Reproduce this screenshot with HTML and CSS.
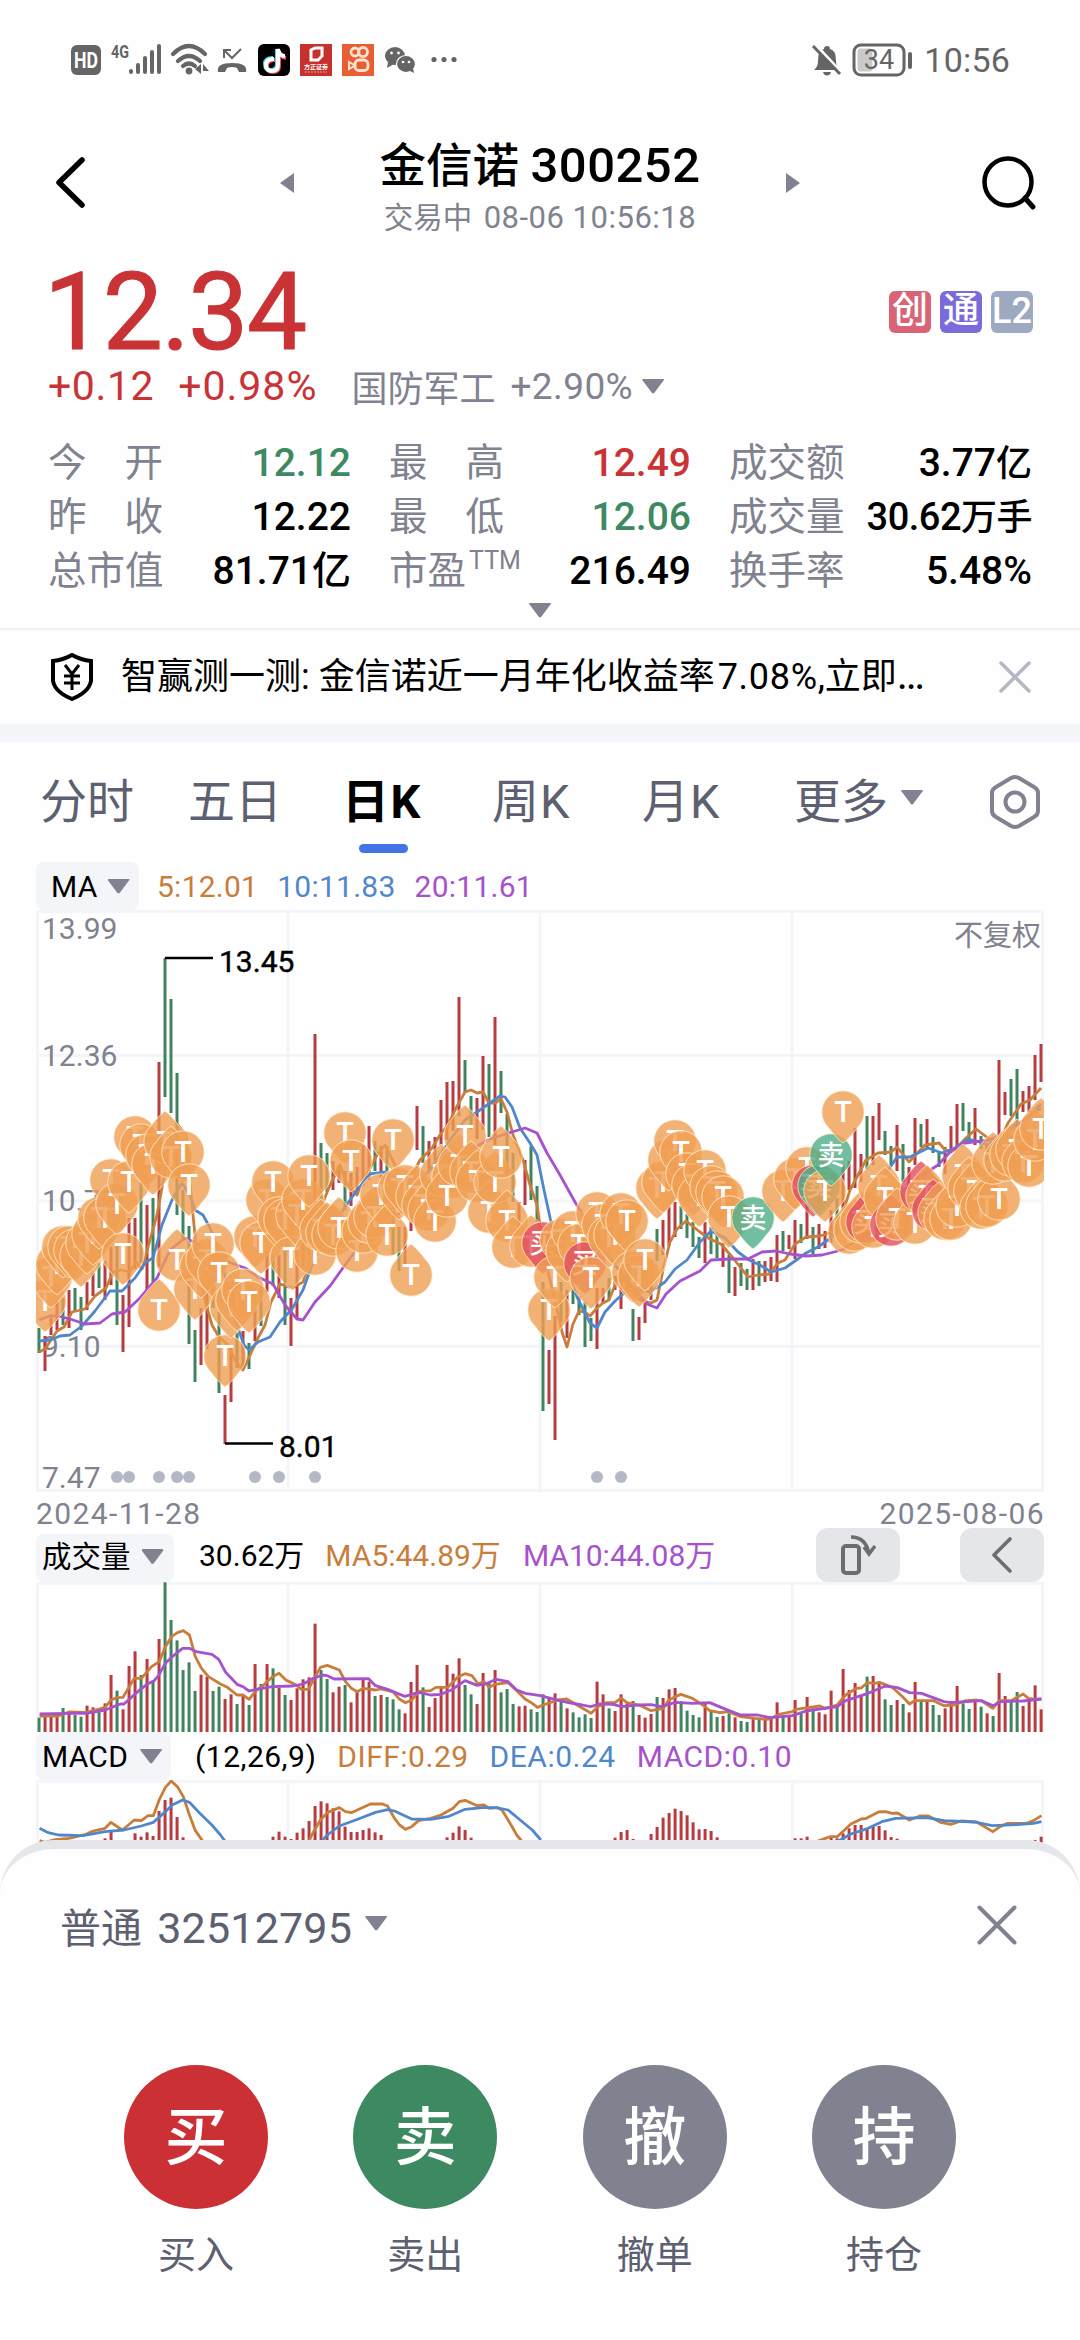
FILE: index.html
```html
<!DOCTYPE html>
<html lang="zh-CN">
<head>
<meta charset="utf-8">
<title>金信诺 300252</title>
<link rel="stylesheet" href="styles.css">
</head>
<body>
<div class="phone">
  <div class="status">
    <svg class="status-icons" width="410" height="60" viewBox="0 0 410 60">
      <rect x="11" y="15" width="30" height="30" rx="6" fill="#656565"/>
      <text x="26" y="38" class="hd" text-anchor="middle" textLength="24" lengthAdjust="spacingAndGlyphs">HD</text>
      <text x="51" y="28" class="g4" textLength="18" lengthAdjust="spacingAndGlyphs">4G</text>
      <g stroke="#656565" stroke-width="4" stroke-linecap="round"><path d="M71 41v1M78 35v7M85 28v14M92 22v20M99 16v26"/></g>
      <g fill="none" stroke="#656565" stroke-width="4.2" stroke-linecap="round"><path d="M113 24q16-16 32 0M118 31q11-10 22 0M123 36q6-5 12 0"/></g>
      <circle cx="129" cy="41" r="3.4" fill="#656565"/><path d="M141 34v10l-6-5zM143 34l6 7h-6z" fill="#656565"/>
      <path d="M158 42q-2-9 14-9t14 9h-7l-2-4q-5-2-10 0l-2 4z" fill="#656565"/>
      <path d="M164 28v-8h7M165 21l7 7 9-9" fill="none" stroke="#656565" stroke-width="2"/>
      <rect x="198" y="14" width="32" height="32" rx="6" fill="#000"/>
      <g fill="none" stroke-width="4"><path d="M213 28q-8 0-8 6t6 6 6-6V19q1 6 7 7" stroke="#45dbe0"/><path d="M215 30q-8 0-8 6t6 6 6-6V21q1 6 7 7" stroke="#ee4c63"/><path d="M214 29q-8 0-8 6t6 6 6-6V19q1 7 7 7" stroke="#fff"/></g>
      <rect x="240" y="14" width="32" height="32" fill="#c7312d"/>
      <path d="M251 20l4-2h7v8l-4 4h-7z" fill="none" stroke="#fff" stroke-width="3"/>
      <text x="256" y="39" class="fz" text-anchor="middle">方正证券</text>
      <path d="M245 42h22" stroke="#ee9b95" stroke-width="1" stroke-dasharray="2 1"/>
      <rect x="282" y="14" width="32" height="32" fill="#e85d31"/>
      <g fill="none" stroke="#ffe3d3" stroke-width="2.8"><circle cx="295" cy="22" r="4"/><circle cx="303" cy="22" r="4.5"/><rect x="295" y="30" width="13" height="10.500" rx="4"/><path d="M289 32v7l6-3.500z" stroke-width="2"/></g>
      <g fill="#656565"><ellipse cx="335" cy="26" rx="10" ry="9"/><path d="M328 32l-1 6 7-4z"/></g>
      <g fill="#656565" stroke="#fff" stroke-width="1.200"><ellipse cx="346" cy="34" rx="9.500" ry="8.500"/></g><path d="M348 40l6 3-1-5z" fill="#656565"/>
      <g fill="#fff"><circle cx="331.500" cy="23" r="1.400"/><circle cx="338.500" cy="23" r="1.400"/><circle cx="343" cy="32" r="1.300"/><circle cx="349" cy="32" r="1.300"/></g>
      <g fill="#656565"><circle cx="374" cy="29.500" r="2.600"/><circle cx="384" cy="29.500" r="2.600"/><circle cx="394" cy="29.500" r="2.600"/></g>
    </svg>
    <div class="status-right">
      <svg width="32" height="34" viewBox="0 0 32 34"><path d="M3 27q4-3 4-9 0-11 6-12 0-3 3-3t3 3q6 1 6 12 0 6 4 9zM12 29h8q-1 3.500-4 3.500t-4-3.500z" fill="#656565"/><path d="M4 1l26 28" stroke="#fff" stroke-width="3"/><path d="M2 3l27 28" stroke="#656565" stroke-width="3"/></svg>
      <svg width="62" height="34" viewBox="0 0 62 34"><rect x="2" y="2" width="50" height="30" rx="7" fill="none" stroke="#656565" stroke-width="3"/><rect x="5.500" y="5.500" width="15" height="23" rx="3" fill="#c9c9c9"/><text x="27" y="26" class="batt" text-anchor="middle">34</text><path d="M58 11v13" stroke="#656565" stroke-width="4" stroke-linecap="round"/></svg>
      <span class="clock">10:56</span>
    </div>
  </div>

  <header class="header">
    <svg class="back" width="32" height="56" viewBox="0 0 32 56"><path d="M27 5L4 27.500 27 50" fill="none" stroke="#000" stroke-width="5.500" stroke-linecap="round" stroke-linejoin="round"/></svg>
    <svg class="prev" width="14" height="22" viewBox="0 0 14 22"><path d="M14 1v20L0 11z" fill="#80828f"/></svg>
    <div class="title">
      <h1>金信诺 <span class="num">300252</span></h1>
      <p>交易中 <span class="num">08-06 10:56:18</span></p>
    </div>
    <svg class="next" width="14" height="22" viewBox="0 0 14 22"><path d="M0 1v20l14-10z" fill="#80828f"/></svg>
    <svg class="search" width="56" height="56" viewBox="0 0 56 56"><circle cx="27" cy="27" r="23.500" fill="none" stroke="#000" stroke-width="4.500"/><path d="M44 43l8 9" stroke="#000" stroke-width="5" stroke-linecap="round"/></svg>
  </header>

  <section class="quote">
    <div class="price-row"><span class="price">12.34</span><div class="tags"><i class="tag t1">创</i><i class="tag t2">通</i><i class="tag t3">L2</i></div></div>
    <div class="change-row"><span class="up">+0.12</span><span class="up pct">+0.98%</span><span class="sector">国防军工</span><span class="sector-pct">+2.90%</span><i class="caret"></i></div>
    <div class="stats">
      <div class="stat"><b>今<s></s>开</b><span class="down">12.12</span></div>
      <div class="stat"><b>最<s></s>高</b><span class="up">12.49</span></div>
      <div class="stat"><b>成交额</b><span>3.77<em>亿</em></span></div>
      <div class="stat"><b>昨<s></s>收</b><span>12.22</span></div>
      <div class="stat"><b>最<s></s>低</b><span class="down">12.06</span></div>
      <div class="stat"><b>成交量</b><span class="tight">30.62<em>万手</em></span></div>
      <div class="stat"><b>总市值</b><span>81.71亿</span></div>
      <div class="stat"><b>市盈<sup>TTM</sup></b><span>216.49</span></div>
      <div class="stat"><b>换手率</b><span>5.48%</span></div>
    </div>
    <div class="expand"><i class="caret"></i></div>
  </section>

  <section class="banner">
    <svg width="44" height="50" viewBox="0 0 44 50"><path d="M22 3q9 5 19 6v20q-2 11-19 18Q5 40 3 29V9q10-1 19-6z" fill="none" stroke="#000" stroke-width="4"/><path d="M15 13l7 9 7-9M22 22v16M14 24h16M14 31h16" fill="none" stroke="#000" stroke-width="3"/></svg>
    <p>智赢测一测: 金信诺近一月年化收益率<span class="num">7.08%</span>,立即<span class="dots">…</span></p>
    <svg width="32" height="32" viewBox="0 0 32 32"><path d="M2 2l28 28M30 2L2 30" stroke="#b4b8c5" stroke-width="3.500" stroke-linecap="round"/></svg>
  </section>

  <nav class="tabs">
    <span>分时</span><span>五日</span><span class="active">日K</span><span>周K</span><span>月K</span>
    <span class="more">更多<i class="caret"></i></span>
    <svg width="52" height="56" viewBox="0 0 52 56"><path d="M26 3q2 0 4 1l15 9q4 2 4 6v18q0 4-4 6l-15 9q-4 2-8 0L7 43q-4-2-4-6V19q0-4 4-6l15-9q2-1 4-1z" fill="none" stroke="#80828f" stroke-width="4"/><circle cx="26" cy="28" r="9.500" fill="none" stroke="#80828f" stroke-width="4"/></svg>
  </nav>

  <section class="charts">
    <div class="legend ma"><span class="chip">MA<i class="caret"></i></span><span class="o">5:12.01</span><span class="b">10:11.83</span><span class="p">20:11.61</span></div>
    <svg id="kline" class="kline" width="1008" height="582" viewBox="36 910 1008 582"></svg>
    <div class="dates"><span>2024-11-28</span><span>2025-08-06</span></div>
    <div class="legend vol"><span class="chip">成交量<i class="caret"></i></span><span class="k">30.62万</span><span class="o">MA5:44.89万</span><span class="p">MA10:44.08万</span>
      <div class="tools">
        <button><svg width="36" height="42" viewBox="0 0 36 42"><rect x="3" y="12" width="16" height="27" rx="3" fill="none" stroke="#6c6d70" stroke-width="4"/><path d="M11 3q15 0 18 17M24 13l5 7 6-8" fill="none" stroke="#6c6d70" stroke-width="3.500"/></svg></button>
        <button><svg width="20" height="36" viewBox="0 0 20 36"><path d="M18 2L2 18l16 16" fill="none" stroke="#6c6d70" stroke-width="3.600" stroke-linecap="round" stroke-linejoin="round"/></svg></button>
      </div>
    </div>
    <svg id="volume" class="volume" width="1008" height="150" viewBox="104.500 246 2926 450" preserveAspectRatio="none"></svg>
    <div class="legend macd"><span class="chip">MACD<i class="caret"></i></span><span class="k">(12,26,9)</span><span class="o">DIFF:0.29</span><span class="b">DEA:0.24</span><span class="p">MACD:0.10</span></div>
    <svg id="macd" class="macd-chart" width="1008" height="68" viewBox="104.500 840 2926 204" preserveAspectRatio="none"></svg>
  </section>

  <section class="sheet">
    <div class="account"><span>普通 <span class="num">32512795</span></span><i class="caret"></i>
      <svg width="40" height="40" viewBox="0 0 40 40"><path d="M2.500 2.500l35 35M37.500 2.500l-35 35" stroke="#80828f" stroke-width="4" stroke-linecap="round"/></svg>
    </div>
    <div class="actions">
      <div class="action"><i class="buy">买</i><span>买入</span></div>
      <div class="action"><i class="sell">卖</i><span>卖出</span></div>
      <div class="action"><i>撤</i><span>撤单</span></div>
      <div class="action"><i>持</i><span>持仓</span></div>
    </div>
  </section>
</div>
<script src="chart.js"></script>
</body>
</html>
```
FILE: styles.css
```css
* { box-sizing: border-box; }
body { margin: 0; background: #fff; font-family: Roboto, "Noto Sans CJK SC", sans-serif; color: #000; }
i, em { font-style: normal; }
h1, p { margin: 0; font-weight: 400; }
.phone { width: 1080px; height: 2340px; overflow: hidden; background: #fefefe; display: flex; flex-direction: column; white-space: nowrap; }
.phone > * { flex: none; }
.caret { display: inline-block; width: 22px; height: 15px; background: #80828f; clip-path: polygon(4% 0, 96% 0, 100% 8%, 54% 98%, 46% 98%, 0 8%); }

.status { height: 120px; padding: 30px 70px 0 60px; display: flex; justify-content: space-between; }
.status-right { height: 60px; display: flex; align-items: center; }
.status-right svg + svg { margin-left: 9px; }
.hd { font: 700 22px Roboto; fill: #fff; }
.g4 { font: 700 19px Roboto; fill: #656565; }
.fz { font: 700 6px "Noto Sans CJK SC"; fill: #fff; }
.batt { font: 400 27px Roboto; fill: #656565; }
.clock { font-size: 34px; color: #656565; margin-left: 10px; line-height: 62px; letter-spacing: .2px; }

.header { height: 130px; padding: 0 43px 0 55px; display: flex; align-items: center; }
.header .back { margin-top: -4px; }
.header .prev { margin: -4px 0 0 193px; }
.header .title { width: 330px; margin: 0 81px 0 81px; text-align: center; }
.header .next { margin: -4px 0 0 0; }
.header .search { margin: -5px 0 0 auto; }
.title h1 { font-size: 46.500px; font-weight: 500; line-height: 58px; margin-top: 7px; }
.title h1 .num { font-size: 49px; letter-spacing: .5px; }
.title p { font-size: 29.500px; line-height: 46px; color: #80828f; }
.title p .num { font-size: 31px; letter-spacing: .5px; margin-left: 4px; }

.quote { height: 378px; padding: 0 48px; }
.price-row { height: 108px; padding-top: 8px; display: flex; justify-content: space-between; }
.price { font-size: 107px; line-height: 110px; color: #c93336; margin-left: -4px; letter-spacing: -1.400px; -webkit-text-stroke: 1.200px #c93336; }
.tags { display: flex; gap: 9px; margin: 33px -1px 0 0; }
.tag { width: 42px; height: 42px; border-radius: 6px; color: #fff; font-size: 36px; font-weight: 500; line-height: 41px; text-align: center; }
.t1 { background: #da6476; } .t2 { background: #7a6bdb; } .t3 { background: #9ca9c1; }
.change-row { height: 60px; margin-top: -2px; display: flex; align-items: center; font-size: 41px; letter-spacing: .6px; color: #80828f; }
.up { color: #c93336; } .down { color: #3d8962; }
.pct { margin-left: 24px; letter-spacing: 1px; }
.sector { font-size: 36px; letter-spacing: 0; margin-left: 34px; }
.sector-pct { font-size: 37px; margin-left: 15px; letter-spacing: .4px; }
.change-row .caret { margin-left: 9px; }
.stats { margin-top: 20px; display: grid; grid-template-columns: 303px 302px 303px; column-gap: 38px; grid-auto-rows: 54px; }
.stat { display: flex; justify-content: space-between; align-items: center; font-size: 39px; line-height: 54px; font-weight: 500; }
.stat b { font-weight: 400; color: #80828f; font-size: 38.500px; }
.stat s { display: inline-block; width: 38px; }
.stat em { font-size: 36px; }
.stat .tight { font-size: 38px; letter-spacing: -.500px; }
.stat sup { font-size: 25px; line-height: 20px; vertical-align: 15px; margin-left: 3px; }
.expand { height: 40px; display: flex; justify-content: center; align-items: center; margin-top: -8px; }

.banner { height: 96px; border-top: 2px solid #f2f2f4; padding: 0 50px; display: flex; align-items: center; }
.banner > svg:last-child { margin-right: -1px; }
.banner p { margin: -8px 0 0 27px; flex: 1; font-size: 36px; }
.banner .num { margin-left: 3px; letter-spacing: .700px; }
.banner .dots { letter-spacing: 4px; font-size: 42px; line-height: 36px; }
.tabs { border-top: 18px solid #f4f5f9; height: 138px; padding: 0 40px; display: flex; align-items: flex-start; font-size: 47px; color: #5c6070; line-height: 119px; }
.tabs span { width: 148px; margin: 0; }
.tabs .active { color: #000; font-weight: 700; position: relative; padding-left: 6px; width: 156px; letter-spacing: 1.500px; }
.tabs .active::after { content: ""; position: absolute; left: 23px; top: 102px; width: 49px; height: 9px; border-radius: 5px; background: #4474e3; }
.tabs span:nth-child(4) { width: 150px; letter-spacing: 1px; }
.tabs span:nth-child(5) { width: 152px; letter-spacing: 1px; }
.tabs .more { display: flex; align-items: center; gap: 13px; width: 140px; }
.more .caret { flex: none; margin-top: -9px; }
.tabs svg { margin: 32px -1px 0 auto; }

.charts { padding: 0 36px; }
.charts > svg { display: block; }
.legend { height: 48px; display: flex; align-items: center; font-size: 30px; letter-spacing: .250px; }
.chip { height: 48px; background: #f4f5f9; border-radius: 8px; display: flex; align-items: center; gap: 12px; }
.o { color: #c97d3b; } .b { color: #5087ca; } .p { color: #a652cd; }
.ma .chip { width: 103px; padding-left: 15px; margin-right: 18px; gap: 10px; }
.ma .b, .ma .p { margin-left: 19px; }
.dates { height: 42px; display: flex; justify-content: space-between; font-size: 30px; line-height: 44px; color: #80828f; letter-spacing: 1.400px; margin-right: -1px; }
.vol { letter-spacing: 0; line-height: 44px; align-items: flex-start; }
.vol .chip { width: 138px; padding: 0 0 3px 6px; font-size: 29.500px; gap: 11px; margin-right: 25px; }
.vol .o { margin-left: 21px; } .vol .p { margin-left: 22px; }
.tools { margin-left: auto; height: 54px; margin-top: -6px; display: flex; gap: 60px; }
.tools button { width: 84px; height: 54px; border: 0; border-radius: 12px; background: #e5e6ea; padding: 0; display: flex; align-items: center; justify-content: center; }
.macd .chip { width: 135px; padding-left: 6px; margin-right: 24px; }
.macd .k { letter-spacing: .500px; }
.macd .o, .macd .b, .macd .p { margin-left: 21px; letter-spacing: .500px; }
.axis { font: 30px Roboto; fill: #80828f; }
.mark { font: 30px Roboto; fill: #000; stroke: #000; stroke-width: .4px; }
.adj { font: 29px "Noto Sans CJK SC"; fill: #80828f; }
.pin-t { font: 500 29px Roboto; fill: #fff; text-anchor: middle; }
.pin-c { font: 500 27px "Noto Sans CJK SC"; fill: #fff; text-anchor: middle; }

.sheet { margin-top: -8px; height: 500px; border-top: 9px solid #e5e6ea; border-radius: 54px 54px 0 0; background: #fefefe; position: relative; }
.account { height: 152px; padding: 0 63px 0 60px; display: flex; align-items: center; color: #5c6070; font-size: 41px; }
.account .num { font-size: 43px; margin-left: 5px; letter-spacing: .200px; }
.account .caret { margin: -4px 0 0 13px; }
.account svg { margin-left: auto; }
.actions { padding: 64px 124px 0; display: flex; justify-content: space-between; }
.action { width: 144px; text-align: center; font-size: 38px; color: #5c6070; }
.action i { display: block; height: 144px; border-radius: 50%; background: #80828f; color: #fff; font-size: 63px; font-weight: 500; line-height: 145px; margin-bottom: 18px; }
.action .buy { background: #cb3035; } .action .sell { background: #3d8962; }
.action span { display: block; line-height: 56px; }
```
FILE: chart.js
```js
const RED = '#b83b40', GREEN = '#40835f';
const ORANGE = '#c97d3b', BLUE = '#5087ca', PURPLE = '#a652cd';

// Daily direction: r = close up, g = close down
const dir =
  'grrrgrggrrgrrgrrrgrgrgggggg' + 'rrggrrgrgrgrgrgrrrrrggrrgrrrrgrgggrrrgrrrrrrggrrgrgggrrgg' +
  'grrgrggggrrgrrrgrrrgrrrggggrggrgrggrgrrrgrrgrgrrrgrrrrgrrggrgrrgrggrrrggrgrgrrggrrrr';

// High and low of each day, as heights in the panel
const range = [
[1328,1353],[1336,1371],[1318,1335],[1300,1330],[1298,1325],[1290,1328],[1288,1312],[1297,1330],[1282,1310],[1273,1296],
[1263,1288],[1261,1300],[1247,1285],[1246,1325],[1295,1352],[1218,1327],[1218,1269],[1182,1263],[1205,1290],[1198,1282],
[1062,1267],[958,1097],[999,1113],[1073,1215],[1190,1239],[1226,1344],[1330,1382],[1308,1365],[1292,1349],[1284,1308],
[1312,1393],[1395,1444],[1345,1402],[1333,1368],[1331,1369],[1343,1369],[1308,1341],[1284,1326],[1251,1292],[1259,1286],
[1255,1298],[1251,1325],[1298,1346],[1247,1318],[1239,1267],[1225,1255],[1034,1260],[1143,1202],[1153,1192],[1161,1190],
[1165,1183],[1171,1210],[1173,1206],[1167,1194],[1145,1186],[1126,1180],[1141,1171],[1146,1178],[1146,1171],[1194,1255],
[1227,1271],[1227,1267],[1186,1231],[1106,1150],[1126,1163],[1141,1170],[1137,1161],[1100,1145],[1082,1140],[1081,1131],
[997,1116],[1060,1092],[1096,1129],[1098,1139],[1056,1130],[1064,1137],[1017,1145],[1071,1113],[1114,1177],[1153,1202],
[1202,1227],[1160,1205],[1146,1200],[1186,1222],[1282,1411],[1350,1404],[1316,1440],[1282,1322],[1290,1338],[1280,1304],
[1296,1315],[1302,1347],[1318,1341],[1288,1349],[1288,1304],[1278,1300],[1276,1290],[1276,1309],[1270,1290],[1309,1341],
[1317,1340],[1302,1323],[1267,1300],[1229,1261],[1220,1255],[1206,1246],[1202,1237],[1206,1229],[1214,1238],[1222,1247],
[1237,1258],[1222,1263],[1227,1254],[1235,1258],[1243,1267],[1255,1293],[1267,1296],[1263,1286],[1269,1290],[1259,1290],
[1261,1286],[1261,1282],[1257,1281],[1235,1282],[1231,1251],[1235,1249],[1220,1259],[1224,1243],[1204,1239],[1227,1254],
[1224,1249],[1231,1248],[1210,1243],[1198,1235],[1165,1210],[1161,1190],[1128,1188],[1154,1182],[1116,1169],[1116,1165],
[1103,1140],[1131,1155],[1146,1165],[1125,1171],[1144,1182],[1167,1194],[1118,1165],[1124,1147],[1119,1149],[1137,1153],
[1153,1167],[1147,1174],[1126,1153],[1104,1147],[1103,1131],[1122,1143],[1108,1145],[1136,1149],[1143,1161],[1137,1161],
[1060,1145],[1092,1115],[1079,1116],[1069,1125],[1091,1112],[1086,1112],[1055,1100],[1044,1082]];

const ma5 = '39,1352 45,1349 57,1331 64,1327 72,1312 85,1309 95,1296 106,1288 113,1272 121,1270 130,1272 136,1262 142,1269 150,1240 157,1215 163,1182 170,1150 178,1125 186,1135 193,1215 198,1265 205,1300 212,1325 219,1337 228,1345 236,1362 243,1370 251,1353 258,1338 265,1325 271,1302 280,1284 292,1288 303,1282 312,1255 322,1205 330,1185 340,1165 346,1182 357,1195 366,1176 377,1155 385,1145 395,1165 405,1190 420,1160 432,1148 440,1135 448,1125 456,1108 465,1092 471,1090 477,1093 483,1092 489,1103 495,1103 501,1099 507,1112 513,1135 523,1160 530,1185 537,1205 545,1260 555,1300 562,1332 567,1347 573,1324 579,1311 585,1312 590,1316 597,1308 603,1303 609,1300 615,1285 620,1270 630,1290 640,1300 651,1303 657,1300 663,1270 670,1242 677,1229 686,1221 700,1232 710,1239 721,1244 733,1258 748,1277 758,1275 769,1274 778,1263 785,1260 795,1244 806,1237 820,1236 832,1232 842,1215 850,1190 858,1175 866,1160 878,1153 891,1152 897,1147 909,1162 925,1145 939,1143 946,1151 955,1150 965,1139 976,1129 988,1138 998,1145 1008,1123 1021,1104 1030,1100 1041,1088';
const ma10 = '39,1341 50,1340 60,1336 70,1335 82,1326 95,1311 110,1291 122,1291 135,1278 146,1262 153,1258 162,1225 172,1200 182,1183 190,1195 195,1210 203,1215 210,1228 220,1255 235,1320 244,1345 249,1350 258,1342 270,1337 280,1322 292,1309 303,1290 312,1265 325,1235 340,1215 350,1200 358,1189 370,1174 387,1172 410,1190 430,1170 450,1140 465,1120 480,1110 490,1103 500,1096 505,1097 512,1107 520,1128 530,1143 537,1155 544,1190 551,1222 565,1262 577,1297 590,1323 597,1328 605,1312 615,1301 630,1288 650,1292 665,1282 675,1269 687,1260 700,1242 711,1231 725,1238 738,1252 749,1260 760,1265 771,1272 785,1268 795,1261 806,1253 818,1247 828,1240 845,1225 865,1200 885,1175 897,1157 910,1157 928,1148 942,1153 955,1148 968,1139 980,1142 988,1145 1000,1138 1011,1126 1020,1124 1041,1104';
const ma20 = '39,1320 50,1316 58,1316 70,1319 85,1324 100,1323 112,1314 125,1312 140,1298 157,1278 170,1250 185,1238 200,1245 215,1255 231,1263 245,1268 260,1278 273,1284 285,1305 297,1319 303,1320 315,1302 330,1286 345,1265 360,1245 385,1225 410,1205 440,1175 470,1150 490,1139 512,1132 525,1128 537,1133 547,1153 560,1175 575,1202 595,1235 615,1265 635,1290 647,1304 657,1308 666,1294 680,1281 700,1271 711,1260 730,1259 748,1259 762,1252 776,1251 790,1254 806,1256 822,1255 842,1250 865,1235 890,1205 915,1180 938,1165 952,1150 965,1143 990,1140 1010,1130 1041,1108';

// Trade pins: day, centre height, d/u = tip down or up, optional b (buy) or s (sell)
const pins = `1,1301,d 2,1277,d 3,1264,d 4,1247,d 5,1247,d 6,1250,d 7,1256,d 8,1243,d 9,1234,d 10,1218,d 11,1218,d 12,1180,d 13,1204,d 14,1254,d 15,1182,d
16,1137,d 17,1145,d 18,1155,d 19,1164,d 20,1310,u 21,1142,u 22,1157,u 23,1260,u 24,1152,d 25,1185,d 26,1289,d 27,1267,d 28,1260,d 29,1244,d 30,1273,d 31,1356,d
32,1307,d 33,1300,d 34,1290,d 35,1302,d 36,1237,d 37,1243,d 38,1200,d 39,1182,d 40,1218,d 41,1220,d 42,1258,d 43,1215,d 44,1200,d 45,1176,d
46,1254,u 47,1230,u 48,1233,u 49,1235,u 50,1228,u 51,1133,d 52,1161,d 53,1251,u 54,1232,u 55,1222,u 56,1217,u 57,1195,d 58,1235,u 59,1140,d 60,1189,d 61,1186,d 62,1275,u
63,1196,u 64,1205,u 65,1210,u 66,1221,u 67,1175,u 69,1177,u 68,1196,u 70,1165,u 71,1136,u 72,1172,u 73,1181,u 75,1212,u 76,1182,u 77,1157,u 78,1221,u 79,1247,u 82,1246,u 84,1243,d,b
87,1240,d 85,1310,d 86,1277,d 88,1251,d 89,1232,d 90,1245,d 91,1263,d,b 92,1278,d 93,1213,d 94,1225,d 95,1237,d 96,1235,d 97,1214,d 98,1221,d 99,1272,d 100,1276,d 101,1260,d
103,1188,d 104,1182,d 105,1160,d 106,1141,d 107,1152,d 108,1174,d 109,1185,d 110,1196,d 111,1171,d 112,1187,d 113,1192,d 114,1197,d 115,1217,d 119,1218,d,s
124,1191,d 126,1179,d 128,1168,d 129,1186,d,b 130,1186,d,s 131,1191,d 132,1155,d,s 134,1112,d
135,1233,u 136,1230,u 137,1222,u 138,1222,u,b 139,1227,u 140,1186,u 141,1198,u 142,1225,u,b 143,1219,u 146,1223,u 147,1192,u,b 148,1196,u 149,1210,u,b 150,1213,u 151,1219,u 152,1219,u 153,1206,u
154,1175,u 155,1188,u 156,1191,u 157,1208,u 158,1206,u 160,1199,u 159,1163,u 161,1160,u 162,1155,u 163,1150,u 164,1162,u 165,1166,u 166,1140,u 167,1129,u`
  .split(/\s+/).map(s => s.split(','));

const vol = [653,648,648,650,624,640,645,650,617,622,632,610,525,572,628,498,454,525,477,540,417,247,360,421,510,487,573,524,530,573,560,597,583,612,585,615,492,552,492,505,563,585,600,565,538,532,371,510,537,577,560,555,607,575,538,545,588,585,591,598,628,640,546,495,562,621,594,558,495,521,475,555,583,612,519,545,510,577,567,612,619,617,628,636,
583,597,580,600,625,637,652,643,654,545,583,625,633,583,610,603,645,653,642,591,594,568,564,604,632,645,652,610,632,651,648,640,652,663,666,655,657,660,655,607,645,650,600,640,591,625,637,643,572,620,507,570,549,585,530,528,545,598,615,600,612,637,546,603,603,615,645,625,603,558,610,627,603,620,640,648,519,588,600,576,618,603,556,628];
const volMa5 = '115,648 170,648 200,636 250,637 285,628 305,622 322,600 340,593 357,592 390,535 410,535 440,500 462,485 480,440 498,410 515,398 532,392 550,405 567,470 585,505 605,530 640,552 660,562 688,585 705,585 723,598 745,570 760,560 775,545 792,530 810,520 830,540 860,555 875,568 895,568 915,530 930,502 950,496 985,510 1003,545 1020,565 1037,575 1055,565 1090,570 1105,567 1140,575 1160,598 1177,608 1195,600 1215,575 1250,572 1265,562 1300,562 1330,530 1350,521 1370,527 1388,552 1405,545 1420,562 1437,553 1475,548 1500,572 1525,598 1545,610 1560,622 1577,615 1620,600 1645,597 1670,612 1700,630 1716,640 1735,620 1760,608 1785,608 1803,594 1820,608 1860,617 1890,632 1925,625 1942,600 1960,590 1977,583 2010,595 2040,615 2060,632 2090,638 2115,635 2150,650 2190,655 2230,658 2265,642 2300,635 2310,628 2380,618 2395,625 2430,615 2455,585 2485,565 2500,564 2518,548 2540,550 2553,547 2590,562 2620,590 2640,612 2655,602 2710,602 2740,617 2770,615 2800,603 2835,600 2850,603 2882,625 2900,602 2935,602 2955,590 2970,582 2985,595 3005,598 3023,597';
const volMa10 = '115,642 200,640 250,640 305,630 350,612 360,612 400,575 430,550 445,545 460,527 480,490 500,470 530,445 550,445 570,455 615,463 635,478 655,517 688,553 705,560 723,573 745,568 790,560 850,558 880,552 910,535 935,525 950,527 970,537 1070,536 1090,557 1125,568 1175,589 1215,577 1250,585 1280,583 1310,570 1350,542 1385,556 1415,550 1440,538 1475,545 1500,570 1525,580 1568,587 1610,598 1650,608 1690,615 1715,620 1740,612 1780,613 1803,620 1850,615 1890,614 1920,620 1960,607 2010,610 2060,608 2100,625 2150,645 2200,645 2235,653 2300,647 2340,633 2430,620 2455,602 2520,580 2570,558 2605,563 2640,578 2675,580 2740,605 2760,608 2850,602 2883,617 2905,605 2970,603 3023,597';

const macdBars = {11:1015,12:995,16:1000,17:1010,18:997,19:1008,20:933,21:900,22:893,23:951,24:1012,39:1010,40:995,41:1010,42:1017,43:998,44:985,45:963,46:918,47:904,48:910,49:925,50:934,51:980,52:996,53:996,54:990,55:985,56:997,57:1005,68:1012,69:998,70:979,71:990,72:1013,96:1013,97:996,98:990,99:1017,102:1002,103:981,104:953,105:939,106:926,107:933,108:946,109:967,110:988,111:987,112:993,113:1012,126:1015,127:1015,128:1010,132:1010,133:1015,134:1000,135:985,136:975,137:975,138:985,139:980,140:978,141:991,142:1011,143:1016,166:1020,167:1010};
const diff = ['115,1022 130,1027 155,1020 200,1015 250,1003 270,993 305,985 322,967 355,990 390,960 410,962 430,947 445,947 462,900 480,862 497,843 515,860 532,890 550,945 567,992 585,1018 600,1040', '890,1040 905,1005 930,960 950,938 985,923 1003,935 1020,938 1075,912 1110,912 1125,918 1145,955 1160,975 1177,988 1195,980 1215,962 1250,955 1280,945 1315,925 1333,905 1350,901 1385,917 1405,915 1420,925 1445,923 1457,930 1475,960 1500,1005 1520,1030', '2370,1025 2410,1010 2430,1010 2470,972 2500,957 2515,955 2550,936 2570,935 2590,940 2605,939 2640,960 2670,948 2695,948 2730,967 2760,973 2790,963 2835,966 2882,995 2900,982 2925,970 2980,970 3000,962 3023,947'];
const dea = ['115,985 140,998 170,1005 240,1007 305,995 360,990 410,978 445,967 480,935 500,915 530,900 550,907 580,940 615,975 640,1005 665,1040', '920,1040 950,1005 985,978 1040,957 1090,937 1125,929 1145,933 1195,957 1250,958 1300,950 1350,928 1400,923 1440,923 1475,930 1510,960 1545,990 1570,1020', '2430,1025 2470,1002 2520,985 2560,965 2600,955 2690,953 2740,962 2830,966 2880,977 2950,974 3000,970 3023,965'];

const color = i => dir[i] === 'g' ? GREEN : RED;
const line = (pts, c) => `<polyline points="${pts}" fill="none" stroke="${c}" stroke-width="2.8" stroke-linejoin="round" vector-effect="non-scaling-stroke"/>`;

let k = '<path d="M37.500 911.500H1042.500V1490.500H37.500zM37 1055.500H1043M37 1201H1043M37 1346.500H1043M288 911V1491M540 911V1491M792 911V1491" fill="none" stroke="#f4f5f9" stroke-width="2.800"/>';
k += [['13.99', 939], ['12.36', 1066], ['10.73', 1211], ['9.10', 1357], ['7.47', 1488]].map(([t, y]) => `<text class="axis" x="42" y="${y}">${t}</text>`).join('');
k += '<text class="adj" x="1041" y="946" text-anchor="end">不复权</text>';
range.forEach(([t, b], i) => { k += `<rect x="${37.5 + 6 * i}" y="${t}" width="3" height="${b - t}" fill="${color(i)}"/>`; });
k += line(ma5, ORANGE) + line(ma10, BLUE) + line(ma20, PURPLE);
k += '<path d="M165 958H213M225 1443.500H273" stroke="#000" stroke-width="2.600"/><text class="mark" x="219" y="972">13.45</text><text class="mark" x="279" y="1457">8.01</text>';
[117, 129, 159, 177, 189, 255, 279, 315, 597, 621].forEach(x => { k += `<circle cx="${x}" cy="1477" r="6" fill="#b4b8c5"/>`; });
const down = 'M0 31Q-6 27-14.500 15.500A21.200 21.200 0 1 1 14.500 15.500Q6 27 0 31z';
pins.forEach(([i, y, d, kind]) => {
  const fill = kind === 'b' ? '#e14e5c' : kind === 's' ? '#4fae88' : '#f09f52';
  const label = kind === 'b' ? '买' : kind === 's' ? '卖' : 'T';
  k += `<g transform="translate(${39 + 6 * i} ${y})"><path d="${down}" ${d === 'u' ? 'transform="scale(1 -1)"' : ''} fill="${fill}" fill-opacity=".8" stroke="#fff3da" stroke-opacity=".75" stroke-width="1"/><text class="${kind ? 'pin-c' : 'pin-t'}" y="10">${label}</text></g>`;
});
document.getElementById('kline').innerHTML = k;

const frame = y => `<path d="M109 ${y + 4}H3026V1100H109zM836 ${y}V1100M1568 ${y}V1100M2300 ${y}V1100" fill="none" stroke="#f4f5f9" stroke-width="2.800" vector-effect="non-scaling-stroke"/>`;
const bar = (i, top, base, c) => `<rect x="${109 + 17.418 * i}" y="${top}" width="8.7" height="${base - top}" fill="${c}"/>`;
document.getElementById('volume').innerHTML = frame(246) + vol.map((v, i) => bar(i, v, 696, color(i))).join('') + line(volMa5, ORANGE) + line(volMa10, PURPLE);
document.getElementById('macd').innerHTML = frame(840) + Object.entries(macdBars).map(([i, v]) => bar(+i, v, +i > 165 ? 1040 : 1030, RED)).join('') + diff.map(p => line(p, ORANGE)).join('') + dea.map(p => line(p, BLUE)).join('');
```
